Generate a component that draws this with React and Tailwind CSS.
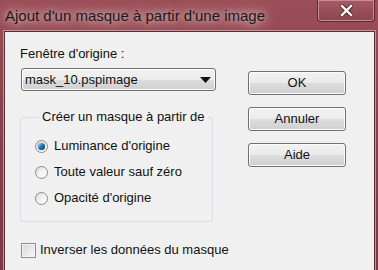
import React from 'react';

const font = { fontFamily: '"Liberation Sans", Arial, sans-serif' };

const Radio = ({ checked, label }) => (
  <div className="flex items-center h-[26px]">
    <span className="w-[13px] h-[13px] rounded-full border border-[#8a8a8a] bg-gradient-to-br from-[#d8d8d8] via-[#f4f4f4] to-[#ffffff] flex items-center justify-center shrink-0">
      {checked && (
        <span className="w-[7px] h-[7px] rounded-full bg-gradient-to-br from-[#9fdcff] via-[#1f73b4] to-[#0d3f6a] shadow-[0_0_1px_#0d3f6a]" />
      )}
    </span>
    <span className="ml-[6px] text-[13px] leading-4 text-[#111] whitespace-nowrap">{label}</span>
  </div>
);

const Btn = ({ children }) => (
  <button className="w-[98px] h-[24px] rounded-[3px] border border-[#707070] bg-[linear-gradient(#f2f2f2_0%,#ebebeb_50%,#dddddd_51%,#cfcfcf_100%)] shadow-[inset_0_0_0_1px_#fcfcfc] text-[13px] text-[#111]">
    {children}
  </button>
);

const App = () => {
  return (
    <div style={font} className="w-[378px] h-[270px] overflow-hidden flex flex-col bg-[linear-gradient(#9b4e58,#8a434c_40%,#7e3843)]">
      {/* Title bar */}
      <div className="h-[31px] flex shrink-0">
        <div className="pl-[5px] pt-[6px] flex-1 text-[15px] leading-5 text-[#1a1a1a] whitespace-nowrap [text-shadow:0_0_6px_#d9b9bd,0_0_12px_#d9b9bd,0_0_18px_#c9a0a6]">
          Ajout d'un masque à partir d'une image
        </div>
        <div className="w-[58px] h-[22px] mr-[3px] rounded-b-[4px] border border-t-0 border-[#5f2830] shadow-[inset_0_0_0_1px_#c28f96] bg-[linear-gradient(#a55a64,#8c444d)] flex items-center justify-center">
          <svg width="13" height="13" viewBox="0 0 13 13">
            <path d="M2 2 L11 11 M11 2 L2 11" stroke="#4a2026" strokeWidth="4" strokeLinecap="square" />
            <path d="M2 2 L11 11 M11 2 L2 11" stroke="#ffffff" strokeWidth="2.4" strokeLinecap="square" />
          </svg>
        </div>
      </div>

      {/* Client area */}
      <div className="flex-1 ml-[4px] mr-[3px] border border-b-0 border-[#5a2c33] bg-[#f0f0f0] shadow-[0_0_0_1px_#c4959b]">
        <div className="flex pt-[14px] pl-[15px]">
          {/* Left column */}
          <div className="w-[196px]">
            <div className="text-[13px] leading-4 text-[#111]">Fenêtre d'origine :</div>
            <div className="mt-[6px] ml-px w-[195px] h-[23px] rounded-[3px] border border-[#707070] bg-[linear-gradient(#f2f2f2_0%,#ebebeb_50%,#dddddd_51%,#cfcfcf_100%)] shadow-[inset_0_0_0_1px_#fcfcfc] flex items-center pl-[3px] pr-[4px]">
              <span className="flex-1 text-[13px] text-[#111]">mask_10.pspimage</span>
              <svg width="11" height="6" viewBox="0 0 11 6">
                <path d="M0 0 H11 L5.5 6 Z" fill="#111" />
              </svg>
            </div>

            <fieldset className="mt-[18px] w-[193px] h-[113px] border border-[#d5dfe5] rounded-[3px] pl-[14px]">
              <legend className="ml-[4px] px-[3px] text-[13px] leading-4 text-[#111]">Créer un masque à partir de</legend>
              <div className="pt-[8px]">
                <Radio checked label="Luminance d'origine" />
                <Radio label="Toute valeur sauf zéro" />
                <Radio label="Opacité d'origine" />
              </div>
            </fieldset>

            <div className="mt-[20px] ml-px flex items-center">
              <span className="w-[15px] h-[15px] shrink-0 border border-[#8e8f8f] bg-gradient-to-br from-[#d6d6d6] to-[#f8f8f8] shadow-[inset_0_0_0_1px_#f4f4f4]" />
              <span className="ml-[4px] text-[13px] leading-4 text-[#111] whitespace-nowrap">Inverser les données du masque</span>
            </div>
          </div>

          {/* Buttons */}
          <div className="ml-[32px] pt-[25px] flex flex-col gap-[12px]">
            <Btn>OK</Btn>
            <Btn>Annuler</Btn>
            <Btn>Aide</Btn>
          </div>
        </div>
      </div>
    </div>
  );
};

export default App;
